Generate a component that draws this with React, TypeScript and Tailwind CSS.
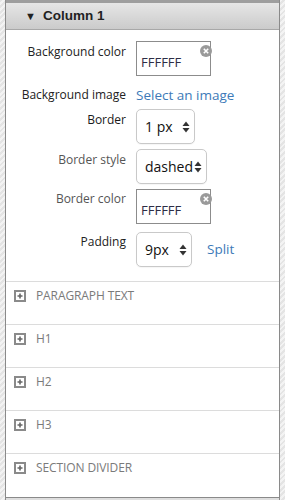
import React from 'react';

const Arrows = () => (
    <svg width="8" height="12" viewBox="0 0 8 12" className="shrink-0">
        <path d="M4 0.5 L7.5 5 L0.5 5 Z" fill="#333" />
        <path d="M4 11.5 L7.5 7 L0.5 7 Z" fill="#333" />
    </svg>
);

const PlusBox = () => (
    <svg width="12" height="12" viewBox="0 0 12 12" className="shrink-0">
        <rect x="1" y="1" width="10" height="10" fill="#fff" stroke="#8a8a8a" strokeWidth="2" />
        <path d="M6 3.5 V8.5 M3.5 6 H8.5" stroke="#666" strokeWidth="1.6" />
    </svg>
);

const ClearIcon = () => (
    <svg width="12" height="12" viewBox="0 0 12 12" className="absolute top-[3px] -right-[2px]">
        <circle cx="6" cy="6" r="6" fill="#9a9a9a" />
        <path d="M3.8 3.8 L8.2 8.2 M8.2 3.8 L3.8 8.2" stroke="#fff" strokeWidth="1.6" />
    </svg>
);

const ColorInput = ({ value }: { value: string }) => (
    <div className="relative w-[75px] h-[35px] border border-[#8c8c8c] bg-white pl-[4px] pt-[11px] text-[13px] leading-[18px] text-[#2d2d45]">
        {value}
        <ClearIcon />
    </div>
);

const Select = ({ value, width }: { value: string; width: string }) => (
    <div className={`${width} h-[35px] border border-[#c9c9c9] rounded-[5px] bg-white flex items-center justify-between pl-[8px] pr-[4px] text-[14px] text-[#111] shadow-[0_1px_1px_rgba(0,0,0,0.04)]`}>
        <span>{value}</span>
        <Arrows />
    </div>
);

const sections = ['PARAGRAPH TEXT', 'H1', 'H2', 'H3', 'SECTION DIVIDER'];

export default function App() {
    return (
        <div className="w-[285px] h-[500px] overflow-hidden flex flex-col px-[5px] bg-[repeating-linear-gradient(135deg,#e4e4e4_0px,#e4e4e4_2px,#f3f3f3_2px,#f3f3f3_4px)]" style={{ fontFamily: '"Open Sans", sans-serif' }}>
            <div className="flex-1 flex flex-col bg-white border-x border-[#8a8a8a]">
                <div className="h-[3px] bg-[#9e9e9e]" />
                <div className="h-[27px] flex items-center gap-[7px] pl-[19px] bg-gradient-to-b from-[#e6e6e6] to-[#cbcbcb] border-b border-[#a8a8a8] text-[#222]" style={{ fontFamily: '"Liberation Sans", Arial, sans-serif' }}>
                    <span className="text-[11px]">▼</span>
                    <span className="text-[13.5px] font-bold">Column 1</span>
                </div>

                <div className="flex flex-col pt-[11px]">
                    <div className="flex">
                        <div className="w-[120px] text-right text-[12px] leading-[18px] pt-[2px] text-[#222]">Background color</div>
                        <div className="ml-[10px]"><ColorInput value="FFFFFF" /></div>
                    </div>
                    <div className="flex mt-[10px] items-center h-[18px]">
                        <div className="w-[120px] text-right text-[12px] leading-[18px] text-[#222]">Background image</div>
                        <a className="ml-[10px] text-[13.5px] leading-[18px] text-[#3d7ab8]">Select an image</a>
                    </div>
                    <div className="flex mt-[5px]">
                        <div className="w-[120px] text-right text-[12px] leading-[18px] pt-[2px] text-[#1a1a1a]">Border</div>
                        <div className="ml-[10px]"><Select value="1 px" width="w-[59px]" /></div>
                    </div>
                    <div className="flex mt-[5px]">
                        <div className="w-[120px] text-right text-[12px] leading-[18px] pt-[2px] text-[#555]">Border style</div>
                        <div className="ml-[10px]"><Select value="dashed" width="w-[71px]" /></div>
                    </div>
                    <div className="flex mt-[5px]">
                        <div className="w-[120px] text-right text-[12px] leading-[18px] pt-[1px] text-[#555]">Border color</div>
                        <div className="ml-[10px]"><ColorInput value="FFFFFF" /></div>
                    </div>
                    <div className="flex mt-[8px]">
                        <div className="w-[120px] text-right text-[12px] leading-[18px] pt-[1px] text-[#222]">Padding</div>
                        <div className="ml-[10px] flex items-center">
                            <Select value="9px" width="w-[56px]" />
                            <a className="ml-[15px] text-[13.5px] text-[#3d7ab8]">Split</a>
                        </div>
                    </div>
                </div>

                <div className="mt-[14px] flex flex-col">
                    {sections.map((s) => (
                        <div key={s} className="h-[43px] border-t border-[#dcdcdc] flex items-start gap-[10px] pl-[8px] pt-[7px]">
                            <div className="pt-[1px]"><PlusBox /></div>
                            <span className="text-[12px] leading-[14px] text-[#7a7a7a] tracking-[-0.1px]">{s}</span>
                        </div>
                    ))}
                </div>
                <div className="flex-1" />
                <div className="border-t border-[#8a8a8a] h-[3px] bg-[#dedede]" />
            </div>
        </div>
    );
}
